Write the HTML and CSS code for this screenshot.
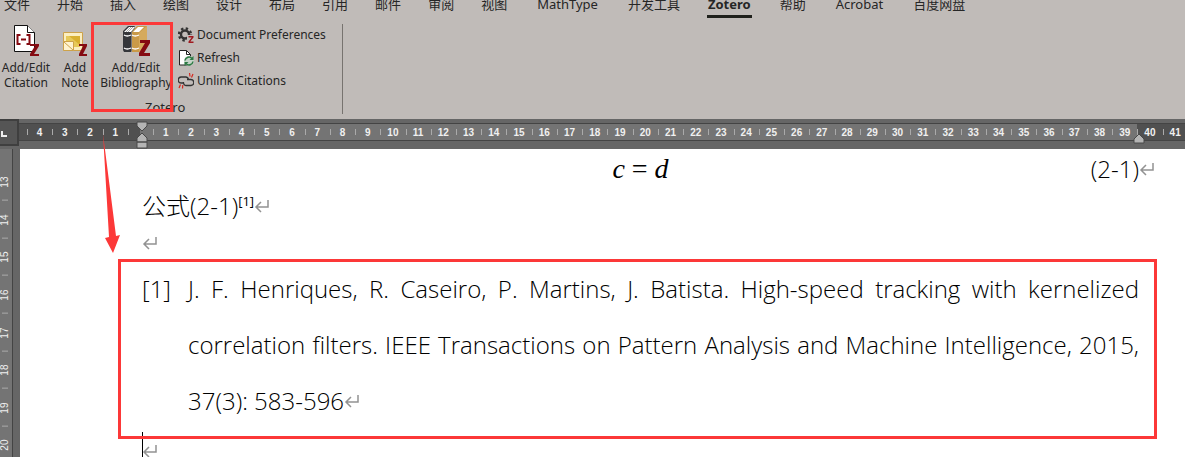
FILE: index.html
```html
<!DOCTYPE html>
<html lang="zh-CN">
<head>
<meta charset="utf-8">
<title>Zotero</title>
<link rel="stylesheet" href="styles.css">
</head>
<body>
<div class="app">
  <header class="ribbon">
    <nav class="tabs">
      <button class="tab">文件</button><button class="tab">开始</button><button class="tab">插入</button><button class="tab">绘图</button><button class="tab">设计</button><button class="tab">布局</button><button class="tab">引用</button><button class="tab">邮件</button><button class="tab">审阅</button><button class="tab">视图</button><button class="tab wide">MathType</button><button class="tab">开发工具</button><button class="tab active">Zotero</button><button class="tab">帮助</button><button class="tab wide">Acrobat</button><button class="tab">百度网盘</button>
    </nav>
    <section class="group">
      <div class="tools">
        <button class="big citation">
          <svg width="26" height="32" viewBox="0 0 26 32"><path d="M1.500 1.500h13l7 7v19h-20z" fill="#fff" stroke="#111"/><path d="M14.500 1.500v7h7" fill="#fff" stroke="#111"/><path d="M7.500 11h-3v9h3M13.500 11h3v9h-3M8 15.500h5" fill="none" stroke="#850b12" stroke-width="2"/><path d="M17 20h9v2l-5 8h5v2h-9v-2l5-8h-5z" fill="#850b12"/></svg>
          <span>Add/Edit<br>Citation</span>
        </button>
        <button class="big note">
          <svg width="26" height="32" viewBox="0 0 26 32"><path d="M1.500 8.500h19v18h-19z" fill="#fbeec0" stroke="#cda24a"/><path d="M4 12h14v11H4z" fill="#e7c958"/><path d="M7 12h11v9z" fill="#d9b02f"/><path d="M1.500 17.500h10v9h-10z" fill="#fff3cf" stroke="#cda24a"/><path d="M2 18l9 8" stroke="#cda24a"/><path d="M17 20h8v2l-4 8h4v2h-8v-2l4-8h-4z" fill="#850b12"/></svg>
          <span>Add<br>Note</span>
        </button>
        <button class="big bibliography">
          <svg width="28" height="32" viewBox="0 0 28 32"><path d="M1 7l5-5h7l-4 6v20H2l-1-2z" fill="#35363a"/><path d="M2 8l5-5h6L9 8z" fill="#fff"/><path d="M4 8l5-5M6 8l5-5" stroke="#aaa"/><path d="M9 8l4-5v22l-4 3z" fill="#75777c"/><path d="M2 11q3 2 7 0M2 24q3 2 7 0" fill="none" stroke="#fff" stroke-width="1.300"/><path d="M10 8l5-6h10v21l-8 5h-7z" fill="#c99a48"/><path d="M11 8l5-5h6l-5 5z" fill="#fff"/><path d="M17 9l8-7v20l-8 6z" fill="#d5aa5d"/><path d="M10 11q3 2 7 0M10 24q3 2 7 0" fill="none" stroke="#fff" stroke-width="1.300"/><path d="M18 16h10v3l-6 10h6v3H17v-3l6-10h-5z" fill="#850b12"/></svg>
          <span>Add/Edit<br>Bibliography</span>
        </button>
        <div class="small-tools">
          <button class="small"><svg width="16" height="16" viewBox="0 0 16 16"><circle cx="7" cy="7.500" r="4" fill="none" stroke="#333" stroke-width="2.400"/><circle cx="7" cy="7.500" r="6" fill="none" stroke="#333" stroke-width="2.400" stroke-dasharray="2.360 2.350"/><path d="M9 8h7v8H9z" fill="#c0bbb8"/><path d="M10.500 9h5v1.500l-3.200 4h3.200V16h-5v-1.500l3.200-4h-3.200z" fill="#a01a20"/></svg>Document Preferences</button>
          <button class="small"><svg width="16" height="16" viewBox="0 0 16 16"><path d="M1.500.5h7l4 4v10.500h-11z" fill="#fff" stroke="#222"/><path d="M8.500.5v4h4" fill="none" stroke="#222"/><circle cx="11" cy="11" r="5" fill="#c5d3c8"/><path d="M7 10.500a4 4 0 0 1 7-2M15 11.500a4 4 0 0 1-7 2" fill="none" stroke="#2c7a43" stroke-width="1.500"/><path d="M15.500 6v4h-4zM6.500 16v-4h4z" fill="#2c7a43"/></svg>Refresh</button>
          <button class="small"><svg width="16" height="16" viewBox="0 0 16 16"><path d="M6 10H3.500a3 3 0 0 1-.5-6h5a3 3 0 0 1 2.500 3M9 6.500h3.500a3 3 0 0 1 .5 6H8A3 3 0 0 1 5.500 9" fill="none" stroke="#333" stroke-width="1.300"/><path d="M11.500 0l.5 3.500M15 1l-1.500 3.500M1 15l1.500-3.500M4.500 15.500l.3-3.500" stroke="#d5281e" stroke-width="1.200"/></svg>Unlink Citations</button>
        </div>
      </div>
      <div class="group-name">Zotero</div>
    </section>
    <i class="highlight"></i>
  </header>

  <div class="ruler">
    <div class="tab-type"><svg width="8" height="8" viewBox="0 0 8 8"><path d="M2 1v5h5" fill="none" stroke="#eee" stroke-width="2"/></svg></div>
    <div class="scale">
      <span class="out">4</span><span class="out">3</span><span class="out">2</span><span class="out">1</span><span class="zero"></span><span>1</span><span>2</span><span>3</span><span>4</span><span>5</span><span>6</span><span>7</span><span>8</span><span>9</span><span>10</span><span>11</span><span>12</span><span>13</span><span>14</span><span>15</span><span>16</span><span>17</span><span>18</span><span>19</span><span>20</span><span>21</span><span>22</span><span>23</span><span>24</span><span>25</span><span>26</span><span>27</span><span>28</span><span>29</span><span>30</span><span>31</span><span>32</span><span>33</span><span>34</span><span>35</span><span>36</span><span>37</span><span>38</span><span>39</span><span class="out">40</span><span class="out">41</span>
    </div>
    <svg class="indent-left" width="12" height="28" viewBox="0 0 12 28"><path d="M1 1h10v4L6 10 1 5zM1 21v-4l5-5 5 5v4zM1 21h10v6H1z" fill="#b4b4b4" stroke="#484848"/></svg>
    <svg class="indent-right" width="12" height="11" viewBox="0 0 12 11"><path d="M1 10V6l5-5 5 5v4z" fill="#b4b4b4" stroke="#484848"/></svg>
  </div>

  <div class="workspace">
    <div class="side-ruler">
      <span>13</span><span>14</span><span>15</span><span>16</span><span>17</span><span>18</span><span>19</span><span>20</span>
    </div>
    <main class="page">
      <div class="row equation"><span></span><span class="math"><i>c</i> = <i>d</i></span><span class="number">(2-1)<svg class="mark" width="15" height="14" viewBox="0 0 15 14"><path d="M14 0v7H2M7 2L2 7l5 5" fill="none" stroke="#929292" stroke-width="1.500"/></svg></span></div>
      <div class="row">公式(2-1)<sup>[1]</sup><svg class="mark" width="15" height="14" viewBox="0 0 15 14"><path d="M14 0v7H2M7 2L2 7l5 5" fill="none" stroke="#929292" stroke-width="1.500"/></svg></div>
      <div class="row"><svg class="mark" width="15" height="14" viewBox="0 0 15 14"><path d="M14 0v7H2M7 2L2 7l5 5" fill="none" stroke="#929292" stroke-width="1.500"/></svg></div>
      <div class="reference">
        <span>[1]</span>
        <div>
          <p class="full">J. F. Henriques, R. Caseiro, P. Martins, J. Batista. High-speed tracking with kernelized</p>
          <p class="full">correlation filters. IEEE Transactions on Pattern Analysis and Machine Intelligence, 2015,</p>
          <p>37(3): 583-596<svg class="mark" width="15" height="14" viewBox="0 0 15 14"><path d="M14 0v7H2M7 2L2 7l5 5" fill="none" stroke="#929292" stroke-width="1.500"/></svg></p>
        </div>
        <i class="frame"></i>
      </div>
      <div class="row caret"><svg class="mark" width="15" height="14" viewBox="0 0 15 14"><path d="M14 0v7H2M7 2L2 7l5 5" fill="none" stroke="#929292" stroke-width="1.500"/></svg></div>
    </main>
  </div>
  <svg class="arrow" width="18" height="120" viewBox="0 0 18 120"><path d="M1 0L14 102l4-1-7 18-8-15 4-1z" fill="#fc3838"/></svg>
</div>
</body>
</html>
```
FILE: styles.css
```css
* { box-sizing: border-box; }
body { margin: 0; background: #666; }
button { border: 0; background: none; padding: 0; color: inherit; font: inherit; }
svg { flex: none; }
p { margin: 0; }

.app {
  position: relative;
  display: flex;
  flex-direction: column;
  height: 100vh;
  overflow: hidden;
  color: #262626;
  font: 13px/15px "Noto Sans", "Noto Sans CJK SC", sans-serif;
}

/* Ribbon */
.ribbon { position: relative; background: #c0bbb8; height: 119px; flex: none; overflow: hidden; }
.tabs { display: flex; gap: 27px; padding-left: 4px; margin-top: -6px; white-space: nowrap; }
.tab { line-height: 20px; height: 24px; padding-bottom: 4px; }
.tab.wide { margin: 0 3px; }
.tab.active { margin: 0 1px 0 0; padding: 0 1px 1px; font-weight: 700; border-bottom: 3px solid #20211c; }
.group { width: 343px; height: 90px; margin-top: 6px; border-right: 1px solid #77736f; }
.tools { display: flex; height: 75px; font-size: 12px; white-space: nowrap; }
.big { display: flex; flex-direction: column; align-items: center; justify-content: flex-start; gap: 4px; flex: none; }
.citation { width: 52px; }
.note { width: 46px; }
.bibliography { width: 76px; }
.small-tools { display: flex; flex-direction: column; margin-left: 4px; margin-top: -1px; }
.small { display: flex; align-items: center; gap: 3px; height: 23px; }
.group-name { padding-left: 145px; line-height: 17px; }
.highlight { position: absolute; left: 91px; top: 22px; width: 82px; height: 90px; border: 3px solid #fc3838; }

/* Horizontal ruler */
.ruler { position: relative; display: flex; flex: none; height: 30px; background: #666; }
.tab-type { display: flex; align-items: center; width: 19px; height: 27px; padding-top: 3px; background: #555; border: solid #3f3f3f; border-width: 2px 2px 2px 0; }
.scale {
  display: flex;
  flex: 1;
  height: 18px;
  margin: 4px -3px 0 0;
  padding-left: 8px;
  background: #505050;
  border: solid #444;
  border-width: 1px 0;
}
.scale span {
  flex: 1;
  min-width: 0;
  text-align: center;
  color: #f0f0f0;
  font: bold 10px/18px "Liberation Sans", sans-serif;
  background: linear-gradient(#aaa, #aaa) 0 center / 1px 6px no-repeat, #747474;
}
.scale .out { background-color: #505050; }
.scale .zero { background: linear-gradient(#aaa, #aaa) 0 center / 1px 6px no-repeat, linear-gradient(90deg, #505050 50%, #747474 50%); }
.indent-left { position: absolute; left: 136px; top: 2px; }
.indent-right { position: absolute; right: 40px; top: 14px; }

/* Document */
.workspace { display: flex; flex: 1; min-height: 0; }
.side-ruler { display: flex; flex-direction: column; width: 20px; padding-top: 14px; margin-bottom: -7px; background: linear-gradient(90deg, #747474 12px, #444 12px 13px, #666 13px); }
.side-ruler span {
  flex: 1;
  width: 10px;
  writing-mode: vertical-rl;
  transform: rotate(180deg);
  text-align: center;
  color: #f0f0f0;
  font: 10px/10px "Liberation Sans", sans-serif;
  background: linear-gradient(#aaa, #aaa) center top / 6px 1px no-repeat;
}
.page {
  flex: 1;
  min-width: 0;
  padding: 1px 46px 0 122px;
  background: #fff;
  color: #000;
  font: 300 24px/37px "Open Sans", "Noto Sans CJK SC", sans-serif;
  white-space: nowrap;
}
.row { height: 37px; }
.mark { vertical-align: 1px; }
.equation { display: grid; grid-template-columns: 1fr auto 1fr; }
.number { text-align: right; }
.number .mark { margin-right: -15px; }
.math { font: 28px/37px "Liberation Serif", serif; }
sup { font-size: 13px; line-height: 13px; font-weight: 400; }
.reference { position: relative; display: grid; grid-template-columns: 46px 1fr; line-height: 56px; }
.full { text-align-last: justify; }
.frame { position: absolute; inset: -2px -18px -10px -24px; border: 3px solid #fc3838; }
.caret { border-left: 1px solid #000; margin-top: 3px; }
.caret .mark { margin-left: -1px; }
.arrow { position: absolute; left: 102px; top: 134px; }
```
